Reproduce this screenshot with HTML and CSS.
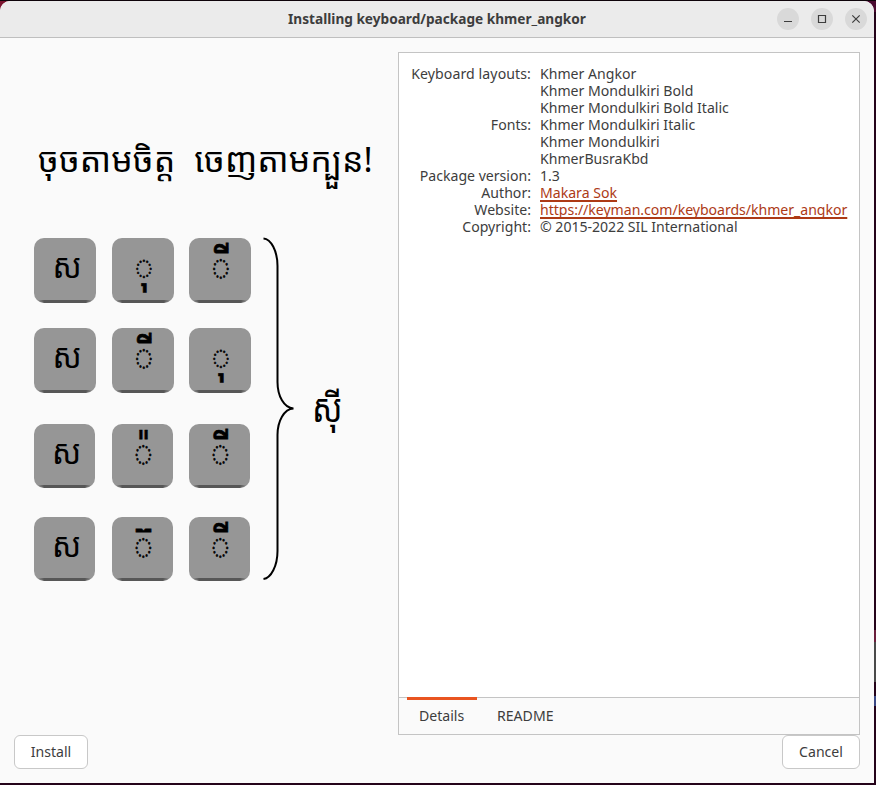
FILE: index.html
```html
<!DOCTYPE html>
<html lang="en">
<head>
<meta charset="utf-8">
<title>Installing keyboard/package khmer_angkor</title>
<link rel="stylesheet" href="styles.css">
</head>
<body>
<main class="window">
  <header class="titlebar">
    <h1 class="title"><span>Installing keyboard/package khmer_angkor</span></h1>
    <div class="controls">
      <button class="control" aria-label="Minimize"><svg viewBox="0 0 22 22"><path d="M7 13.5h8"/></svg></button>
      <button class="control" aria-label="Maximize"><svg viewBox="0 0 22 22"><path d="M7.5 7.5h7v7h-7z"/></svg></button>
      <button class="control" aria-label="Close"><svg viewBox="0 0 22 22"><path d="M7.3 7.3l7.4 7.4M14.7 7.3l-7.4 7.4"/></svg></button>
    </div>
  </header>
  <div class="content">
    <section class="welcome" lang="km">
      <p class="slogan"><span>ចុចតាមចិត្ត</span><span>ចេញតាមក្បួន!</span></p>
      <div class="diagram">
        <div class="keys">
          <div class="row"><span class="key"><b class="letter">ស</b></span><span class="key"><b class="sign low">◌ុ</b></span><span class="key"><b class="sign">◌ី</b></span></div>
          <div class="row"><span class="key"><b class="letter">ស</b></span><span class="key"><b class="sign">◌ី</b></span><span class="key"><b class="sign low">◌ុ</b></span></div>
          <div class="row small"><span class="key"><b class="letter">ស</b></span><span class="key"><b class="sign">◌៉</b></span><span class="key"><b class="sign">◌ី</b></span></div>
          <div class="row small"><span class="key"><b class="letter">ស</b></span><span class="key"><b class="sign">◌៊</b></span><span class="key"><b class="sign">◌ី</b></span></div>
        </div>
        <svg class="brace" viewBox="0 0 34 344"><path d="M1.5 1.5C9 2 15.500 14 15.500 29V145C15.500 159 22 171 31.500 171.500C22 172 15.500 184 15.500 198V314C15.500 329 9 341 1.500 342"/></svg>
        <span class="result">ស៊ី</span>
      </div>
    </section>
    <section class="panel">
      <dl class="details">
        <dt class="wide">Keyboard layouts:</dt><dd>Khmer Angkor</dd>
        <dt class="fonts">Fonts:</dt>
        <dd><div>Khmer Mondulkiri Bold</div><div>Khmer Mondulkiri Bold Italic</div><div>Khmer Mondulkiri Italic</div><div>Khmer Mondulkiri</div><div>KhmerBusraKbd</div></dd>
        <dt>Package version:</dt><dd>1.3</dd>
        <dt>Author:</dt><dd><a>Makara Sok</a></dd>
        <dt>Website:</dt><dd><a class="url">https://keyman.com/keyboards/khmer_angkor</a></dd>
        <dt>Copyright:</dt><dd class="copyright">© 2015-2022 SIL International</dd>
      </dl>
      <nav class="tabs"><span class="tab active">Details</span><span class="tab">README</span></nav>
    </section>
  </div>
  <footer class="actions"><button class="button install">Install</button><button class="button cancel">Cancel</button></footer>
</main>
</body>
</html>
```
FILE: styles.css
```css
* { box-sizing: border-box; }
body {
  margin: 0;
  height: 785px;
  padding: 1px 2px 2px 0;
  overflow: hidden;
  background:
    linear-gradient(#0d0309, #0d0309) top / 100% 1px no-repeat,
    linear-gradient(90deg, #7b1530 0 20px, #4a0a30 840px) top / 100% 12px no-repeat,
    linear-gradient(#25031a 630px, #6b1f3c 630px 642px, #4a4a4a 642px 682px, #25031a 682px 696px, #3c4a86 696px 706px, #25031a 706px);
  color: #3d3d3d;
  font: 14.100px/17px "Noto Sans", "Open Sans", sans-serif;
}
.window { height: 782px; display: flex; flex-direction: column; background: #fafafa; border-radius: 10px 10px 0 0; overflow: hidden; }
.titlebar { height: 37px; flex: none; display: grid; grid-template-columns: 1fr; background: #ebebeb; border-bottom: 1px solid #bfbfbf; }
.title { grid-area: 1 / 1; place-self: center; margin: 0; font-size: 13.650px; font-weight: 700; line-height: 20px; }
.controls { grid-area: 1 / 1; place-self: center end; display: flex; gap: 12px; margin-right: 7px; }
.control { width: 22px; height: 22px; padding: 0; border: 0; border-radius: 50%; background: #d9d9d9; }
.control svg { display: block; fill: none; stroke: #3d3d3d; stroke-width: 1.2; }
.content { height: 697px; flex: none; display: flex; padding-top: 14px; }
.welcome { width: 398px; padding-top: 78px; color: #000; font-family: "Noto Sans Khmer", "Khmer OS", sans-serif; }
.slogan { margin: 0; height: 108px; padding-left: 38px; display: flex; gap: 19px; font-size: 34px; line-height: 58px; white-space: nowrap; }
.diagram { display: flex; padding-left: 34px; }
.keys { width: 228px; }
.row { display: flex; gap: 15.500px; height: 90px; }
.row:nth-child(2) { height: 96px; }
.row:nth-child(3) { height: 93px; }
.key {
  width: 62px;
  height: 65px;
  border-radius: 10px;
  background: linear-gradient(90deg, #b8b8b8, #575757 10px calc(100% - 10px), #b8b8b8) bottom / 100% 3px no-repeat, #969696;
  text-align: center;
  font-size: 30px;
  line-height: 60px;
}
.key b { display: block; font-weight: 400; }
.letter { transform: translate(2px, -3px) scale(1.050, 1.150); }
.sign { -webkit-text-stroke: 0.500px #000; transform: translate(1px, -3px) scale(1.150, 1.500); }
.sign.low { transform: translate(1px, -2px) scale(1.150, 1.400); }
.small { gap: 16.500px; }
.small .key { width: 61px; height: 64px; }
.brace { width: 34px; height: 344px; margin-top: -1px; fill: none; stroke: #000; stroke-width: 2; }
.result { height: 60px; margin: 140px 0 0 16px; font-size: 33px; line-height: 60px; transform: scaleY(1.200); }
.panel { width: 462px; height: 683px; border: 1px solid #c4c4c4; background: #fff; display: flex; flex-direction: column; }
.details { flex: 1; margin: 0; padding-top: 12px; display: grid; grid-template-columns: 132px 1fr; column-gap: 9px; align-content: start; white-space: nowrap; }
.details dt { text-align: right; }
.details dd { margin: 0; }
.details .wide { letter-spacing: 0.100px; }
.fonts { align-self: center; }
.copyright { letter-spacing: -0.020px; }
a { color: #ad3a16; text-decoration: underline; text-decoration-thickness: 2px; text-underline-offset: 2px; text-decoration-skip-ink: none; }
.url { letter-spacing: -0.030px; }
.tabs { height: 37px; display: flex; gap: 8px; padding-left: 8px; border-top: 1px solid #c4c4c4; background: #fafafa; }
.tab { margin-top: -1px; height: 37px; padding: 4px 12px 0; line-height: 24px; border-top: 3px solid transparent; }
.active { width: 70px; border-color: #e95420; }
.actions { display: flex; justify-content: space-between; padding: 0 14px; }
.button { height: 34px; border: 1px solid #c8c8c8; border-radius: 6px; background: #fff; color: #3d3d3d; font: inherit; padding: 0 0 2px; }
.install { width: 74px; }
.cancel { width: 78px; }
```
